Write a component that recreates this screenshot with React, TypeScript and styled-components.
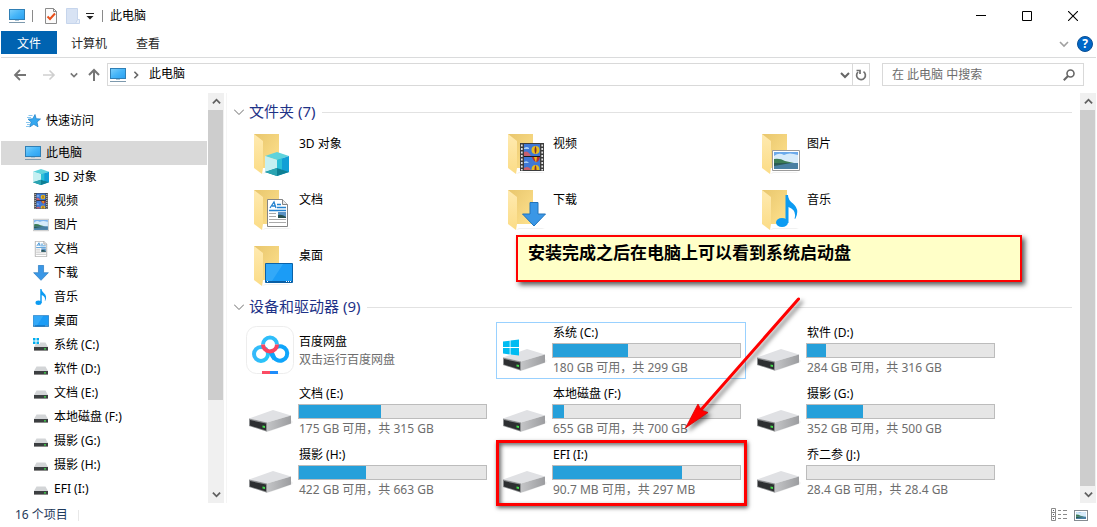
import React from "react";
import styled, { createGlobalStyle } from "styled-components";

const GlobalStyle = createGlobalStyle`
  *, *::before, *::after { box-sizing: border-box; }
  body {
    margin: 0;
    background: #fff;
    color: #000;
    font: 12px/16px "Noto Sans", "Noto Sans CJK SC", sans-serif;
  }
  button, input {
    font: inherit;
    color: inherit;
    margin: 0;
    padding: 0;
    border: 0;
    background: none;
  }
  ul { list-style: none; margin: 0; padding: 0; }
  a { color: inherit; text-decoration: none; }
  svg { display: block; flex: none; }
`;

/* ---------- window frame ---------- */

const Window = styled.div`
  display: flex;
  flex-direction: column;
  min-height: 100vh;
  padding: 0 1px;
  min-width: 0;
`;

const TitleBar = styled.header`
  display: flex;
  align-items: center;
  height: 31px;
  padding-left: 8px;
`;

const QuickTools = styled.div`
  display: flex;
  align-items: center;
  gap: 7px;
`;

const ToolButton = styled.button<{ $width?: number }>`
  display: flex;
  align-items: center;
  justify-content: center;
  width: ${(p) => p.$width ?? 16}px;
  height: 20px;
`;

const ToolDivider = styled.span`
  width: 1px;
  height: 12px;
  background: #8a8a8a;
`;

const WindowTitle = styled.h1`
  flex: 1;
  margin: 0 0 0 7px;
  font-size: 12px;
  font-weight: 400;
`;

const CaptionButton = styled.button`
  display: flex;
  align-items: center;
  justify-content: center;
  width: 46px;
  height: 30px;
`;

const RibbonTabs = styled.nav`
  display: flex;
  align-items: center;
  height: 27px;
  padding-bottom: 3px;
  border-bottom: 1px solid #dadbdc;
`;

const RibbonTab = styled.button<{ $active?: boolean }>`
  height: 23px;
  padding: 2px ${(p) => (p.$active ? 16 : 14)}px 0;
  margin-right: ${(p) => (p.$active ? 0 : 1)}px;
  color: ${(p) => (p.$active ? "#fff" : "#262626")};
  background: ${(p) => (p.$active ? "#0063b1" : "transparent")};
`;

const RibbonEnd = styled.div`
  display: flex;
  align-items: center;
  gap: 8px;
  margin-left: auto;
  padding: 3px 3px 0 0;
`;

const HelpButton = styled.button`
  width: 16px;
  height: 16px;
  border-radius: 50%;
  border: 1px solid #0a4f94;
  background: #0067c8;
  color: #fff;
  font-size: 12px;
  line-height: 14px;
  font-weight: 700;
`;

const AddressRow = styled.div`
  display: flex;
  align-items: center;
  height: 35px;
  padding: 0 12px 2px 11px;
`;

const NavButtons = styled.div`
  display: flex;
  align-items: center;
  gap: 8px;
  width: 95px;
`;

const AddressBox = styled.div`
  display: flex;
  flex: 1;
  align-items: center;
  height: 23px;
  padding-left: 2px;
  border: 1px solid #d9d9d9;
`;

const Crumb = styled.button`
  margin-left: 3px;
  padding-bottom: 2px;
`;

const AddressEnd = styled.div`
  display: flex;
  align-items: stretch;
  align-self: stretch;
  margin-left: auto;

  button { height: auto; }
  button + button { border-left: 1px solid #d9d9d9; }
`;

const SearchBox = styled.label`
  display: flex;
  align-items: center;
  width: 202px;
  height: 23px;
  margin-left: 12px;
  padding: 0 8px 0 9px;
  border: 1px solid #d9d9d9;
`;

const SearchInput = styled.input`
  flex: 1;
  min-width: 0;
  outline: 0;
  &::placeholder { color: #6d6d6d; opacity: 1; }
`;

/* ---------- body ---------- */

const Body = styled.div`
  display: flex;
  flex: 1;
`;

const Sidebar = styled.aside`
  display: flex;
  width: 225px;
  flex: none;
  padding-right: 2px;
`;

const NavTree = styled.ul`
  flex: 1;
  padding: 16px 1px 2px 0;
`;

const NavItem = styled.li<{ $root?: boolean }>`
  margin-bottom: ${(p) => (p.$root ? 8 : 0)}px;
`;

const NavLink = styled.a<{ $level: number; $selected?: boolean }>`
  display: flex;
  align-items: center;
  gap: 5px;
  height: 24px;
  padding-left: ${(p) => 16 + p.$level * 8}px;
  background: ${(p) => (p.$selected ? "#d9d9d9" : "transparent")};
`;

const ScrollTrack = styled.div`
  display: flex;
  flex-direction: column;
  width: 16px;
  background: #f0f0f0;
`;

const ScrollButton = styled.button`
  display: flex;
  align-items: center;
  justify-content: center;
  height: 17px;
  flex: none;
`;

const ScrollRun = styled.div`
  flex: 1;
  padding-right: 1px;
`;

const ScrollThumb = styled.div<{ $size: string }>`
  height: ${(p) => p.$size};
  background: #cdcdcd;
`;

const Pane = styled.main`
  position: relative;
  flex: 1;
  min-width: 0;
  padding: 7px 8px 2px 7px;
  border-left: 1px solid #f5f5f5;
`;

const GroupHeader = styled.button`
  display: flex;
  align-items: center;
  width: 100%;
  height: 24px;
  margin-bottom: 3px;
  color: #1e3287;
  font-size: 15px;
  line-height: 20px;
  white-space: nowrap;

  span { padding-bottom: 2px; }
  svg { margin-right: 5px; }

  &::after {
    content: "";
    flex: 1;
    height: 1px;
    margin-left: 7px;
    background: #e2e2e2;
  }
`;

const TileGrid = styled.ul<{ $gap: number }>`
  display: grid;
  grid-template-columns: repeat(auto-fill, 250px);
  gap: ${(p) => p.$gap}px 4px;
  padding-left: 8px;
`;

const FolderTile = styled.li`
  display: flex;
  gap: 5px;
  height: 56px;
  padding: 3px 4px 0;
`;

const FolderName = styled.span`
  padding-top: 6px;
`;

const DriveTile = styled.li<{ $focused?: boolean }>`
  position: relative;
  display: flex;
  gap: 4px;
  height: 57px;
  padding: 3px;
  border: 1px solid ${(p) => (p.$focused ? "#99d1ff" : "transparent")};
`;

const DriveInfo = styled.div`
  display: flex;
  flex-direction: column;
  flex: 1;
  justify-content: center;
  gap: 2px;
  margin: -1px 0;
`;

const DriveText = styled.span<{ $muted?: boolean }>`
  padding-left: 1px;
  color: ${(p) => (p.$muted ? "#6d6d6d" : "#000")};
`;

const Gauge = styled.div`
  width: 189px;
  height: 15px;
  border: 1px solid #bcbcbc;
  background: #e6e6e6;
`;

const GaugeFill = styled.div`
  height: 100%;
  background: #26a0da;
`;

/* ---------- annotations ---------- */

const Highlight = styled.span`
  position: absolute;
  inset: -5px -2px -6px -1px;
  border: 3px solid #f00;
  box-shadow: 1px 2px 4px rgba(0, 0, 0, 0.6), inset 2px 2px 4px rgba(0, 0, 0, 0.6);
`;

const Callout = styled.p`
  position: absolute;
  top: 142px;
  left: 289px;
  width: 506px;
  height: 47px;
  margin: 0;
  padding: 5px 10px;
  border: 2px solid #f00;
  background: #ffffc8;
  box-shadow: 3px 3px 5px rgba(0, 0, 0, 0.65);
  font: 700 17px/20px "Noto Sans CJK SC", sans-serif;
`;

const Arrow = styled.svg`
  position: absolute;
  top: 197px;
  left: 449px;
  filter: drop-shadow(3px 3px 2px rgba(0, 0, 0, 0.5));
  pointer-events: none;
`;

const StatusBar = styled.footer`
  display: flex;
  align-items: center;
  gap: 7px;
  height: 24px;
  padding: 0 8px 0 14px;
  color: #1e395b;
`;

const StatusDivider = styled.span`
  width: 1px;
  height: 11px;
  margin: 0 auto 0 3px;
  background: #e8e8e8;
`;

/* ---------- line icons ---------- */

type ChevronProps = { dir: "up" | "down" | "right"; size?: number; color?: string; weight?: number };

const chevronPaths = { up: "M1 7 5 3 9 7", down: "M1 3 5 7 9 3", right: "M3 1 7 5 3 9" };

const Chevron = ({ dir, size = 10, color = "#666", weight = 2 }: ChevronProps) => (
  <svg width={size} height={size} viewBox="0 0 10 10" fill="none" stroke={color} strokeWidth={weight}>
    <path d={chevronPaths[dir]} />
  </svg>
);

const GroupChevron = () => (
  <svg width="10" height="10" viewBox="0 0 10 10" fill="none" stroke="#6d6d6d">
    <path d="M0 2.500 5 7.500 10 2.500" />
  </svg>
);

const LeftArrow = ({ color }: { color: string }) => (
  <svg width="14" height="14" viewBox="0 0 14 14" fill="none" stroke={color} strokeWidth="1.800">
    <path d="M13 7H2M7 2 2 7l5 5" />
  </svg>
);

const RightArrow = ({ color }: { color: string }) => (
  <svg width="14" height="14" viewBox="0 0 14 14" fill="none" stroke={color} strokeWidth="1.600">
    <path d="M1 7h11M7.500 2.500 12 7l-4.500 4.500" />
  </svg>
);

const UpArrow = () => (
  <svg width="12" height="14" viewBox="0 0 12 14" fill="none" stroke="#757575" strokeWidth="2">
    <path d="M6 13V2M1 7l5-5 5 5" />
  </svg>
);

const RefreshIcon = () => (
  <svg width="12" height="12" viewBox="0 0 12 12" fill="none" stroke="#707070" strokeWidth="1.700">
    <path d="M3 3A4.400 4.400 0 1 0 8.500 2.600" />
    <path d="M1.500 1.500H5V5" />
  </svg>
);

const SearchIcon = () => (
  <svg width="12" height="12" viewBox="0 0 12 12" fill="none" stroke="#666">
    <circle cx="7.500" cy="4.500" r="3.500" strokeWidth="1.600" />
    <path d="M5 7 .8 11.200" strokeWidth="2" />
  </svg>
);

/* ---------- picture icons ---------- */

const PcIcon = () => (
  <svg width="16" height="16" viewBox="0 0 16 16">
    <defs>
      <linearGradient id="pcScreen" x1="0" y1="0" x2="1" y2="1">
        <stop offset="0" stopColor="#7fd0fb" />
        <stop offset=".5" stopColor="#45b5f8" />
        <stop offset="1" stopColor="#2a9ff0" />
      </linearGradient>
    </defs>
    <rect x=".5" y="1.500" width="15" height="10" fill="url(#pcScreen)" stroke="#2f7fb5" />
    <path d="M6 12h4v1H6z" fill="#a9c4d6" />
    <path d="M0 14.500h16" stroke="#7d99ad" />
  </svg>
);

const StarIcon = () => (
  <svg width="16" height="16" viewBox="0 0 16 16">
    <path
      d="M10 1.500l1.200 4.200 4.300.3-3.500 3 1 4.800-4.200-2.500-4.100 2.700 1.500-5L3 6.200l4.800-.5z"
      fill="#35a8f0"
      stroke="#1b7cc6"
      strokeWidth=".7"
    />
    <path d="M3.500 2.500h4M2 4.500h4M1 9.500h4M2 11.500h3M1 13.500h3" stroke="#7cc0ec" strokeWidth=".9" />
  </svg>
);

const CubeArt = () => (
  <>
    <path d="M12 0 24 4 12 8 0 4z" fill="#5ed3dc" />
    <path d="M0 4 12 8V24L0 20z" fill="#c5f0f2" />
    <path d="M24 4 12 8V24L24 20z" fill="#129fd6" />
    <path d="M0 20 12 16 24 20 12 24z" fill="#0e7f93" />
    <path d="M0 20 12 16V24z" fill="#2aa4b2" />
    <path d="M12 8 17 6.300V17.500L12 16z" fill="#2bc0d8" />
  </>
);

const FilmArt = () => (
  <>
    <path d="M0 0h24v28H0z" fill="#3c3c3c" />
    <path d="M4 1h16v12H4zM4 14h16v13H4z" fill="#3f78d6" />
    <path d="M4 9q4-2 7 4H4zM4 25q5-3 7 2H4z" fill="#c8606e" />
    <path d="M4 5q3-2 5 0v1H4zM4 19q3-2 5 1H4z" fill="#a9cdf3" />
    <path d="M1.800 1.500v26M22.200 1.500v26" stroke="#e4e4e4" strokeWidth="1.700" strokeDasharray="2 1.500" />
    <circle cx="15.500" cy="7" r="4" fill="#e8bd1c" />
    <path d="M15.500 3q-2 4 0 8 2-4 0-8" fill="#7c2f2c" />
    <path d="M12 14h8q-1 5-4 5-3-1-4-5" fill="#b8302e" />
    <path d="M14 14h3l-1 6z" fill="#e8bd1c" />
    <path d="M11.500 27q0-5 4-5t4 5z" fill="#e8bd1c" />
    <path d="M14.500 27q0-4 1-5 1 1 1 5z" fill="#8c322c" />
    <path d="M4 13h16v1H4z" fill="#1b1b1b" />
  </>
);

const PictureArt = () => (
  <>
    <path d="M.5.5h27v20H.5z" fill="#fff" stroke="#9a9a9a" />
    <path d="M2 2h24v17H2z" fill="#6ba9ea" />
    <path d="M2 6q5-4 10-1 5-3 14 0v8H2z" fill="#d7ebfa" />
    <path d="M2 9q6-1 11 2l9 2H2z" fill="#3d7d56" />
    <path d="M2 13h24v6H2z" fill="#497fa2" />
    <path d="M2 13h17L2 16z" fill="#2b5c53" />
  </>
);

const DocArt = () => (
  <>
    <path d="M.5.5h15l5 5v22H.5z" fill="#fff" stroke="#858585" />
    <path d="M15.500.5v5h5" fill="#e8e8e8" stroke="#858585" />
    <path d="M3 9 7 3l2 6M5 7h3M10 5.500h4M10 8.500h9M2 11.500h17" fill="none" stroke="#2382cf" strokeWidth="1.300" />
    <path d="M2 14.500h7M2 17.500h7M2 20.500h17M2 23.500h17" stroke="#aaa" />
    <path d="M11 13h8v6h-8z" fill="#5b92c4" />
    <path d="M11 16q4-1 8 2v1h-8z" fill="#27504f" />
  </>
);

const DownArt = () => <path d="M8 .5h8V12h7.500L12 24 .5 12H8z" fill="#3a97e6" stroke="#2274bb" />;

const NoteArt = () => (
  <>
    <ellipse cx="6" cy="27.500" rx="6" ry="4.500" fill="#0c9bf2" />
    <path d="M9.500 0H12q0 5 5 8.500 7 6 2.500 15-1 1-.8-.5 2-8-6.200-11V28h-3z" fill="#0c9bf2" />
  </>
);

const DesktopArt = () => (
  <>
    <path d="M.5.5h27v19H.5z" fill="#1b9cf6" stroke="#0a62a8" />
    <path d="M1 1h17L7 18H1z" fill="#45b2fa" opacity=".6" />
    <path d="M1 18h26v1.500H1z" fill="#0a5da3" />
    <path d="M2 18.500h2M21 18.500h5" stroke="#fff" strokeDasharray="1 1" />
  </>
);

const art = {
  cube: { Art: CubeArt, w: 24, h: 24, x: 19, y: 22 },
  film: { Art: FilmArt, w: 24, h: 28, x: 20, y: 13 },
  picture: { Art: PictureArt, w: 28, h: 21, x: 18, y: 20 },
  doc: { Art: DocArt, w: 21, h: 28, x: 21, y: 13 },
  down: { Art: DownArt, w: 24, h: 25, x: 22, y: 16 },
  note: { Art: NoteArt, w: 22, h: 32, x: 22, y: 9 },
  desktop: { Art: DesktopArt, w: 28, h: 20, x: 19, y: 21 },
};

type ArtName = keyof typeof art;

const SmallIcon = ({ name }: { name: ArtName }) => {
  const { Art, w, h } = art[name];
  return (
    <svg width="16" height="16" viewBox={`0 0 ${w} ${h}`}>
      <Art />
    </svg>
  );
};

const FolderIcon = ({ name }: { name: ArtName }) => {
  const { Art, w, h, x, y } = art[name];
  return (
    <svg width="48" height="48" viewBox="0 0 48 48">
      <defs>
        <linearGradient id="folderBack" x1="0" y1="0" x2="1" y2="1">
          <stop offset="0" stopColor="#e8c66d" />
          <stop offset="1" stopColor="#ffe28e" />
        </linearGradient>
        <linearGradient id="folderFlap" x1="0" y1="0" x2="0" y2="1">
          <stop offset="0" stopColor="#ffeab0" />
          <stop offset="1" stopColor="#fbdc86" />
        </linearGradient>
      </defs>
      <path d="M16 44l3-2h26l-3 1H20z" fill="#f1f1f1" />
      <path d="M8 4h25v34H8z" fill="url(#folderBack)" />
      <path d="M8 4l9 7v27l-1 6-8-6z" fill="url(#folderFlap)" />
      <svg x={x} y={y} width={w} height={h} viewBox={`0 0 ${w} ${h}`}>
        <Art />
      </svg>
    </svg>
  );
};

const SmallDrive = ({ system }: { system?: boolean }) => (
  <svg width="16" height="16" viewBox="0 0 16 16">
    <path d="M3.500 5.500h9l2.500 4.500H1z" fill="#d3d5d7" />
    <path d="M1 10h14v3.500H1z" fill="#3c3f41" />
    <path d="M1 13.500h14" stroke="#8a8a8a" />
    <path d="M11 11.200h2v1.300h-2z" fill="#3fe04a" />
    {system && (
      <>
        <path d="M0 0h7v7H0z" fill="#fff" />
        <path d="M0 1h2.500v2.500H0zM3.500 1H6v2.500H3.500zM0 4.500h2.500V7H0zM3.500 4.500H6V7H3.500z" fill="#00adef" />
      </>
    )}
  </svg>
);

const DriveIcon = ({ system }: { system?: boolean }) => (
  <svg width="48" height="48" viewBox="0 0 48 48">
    <defs>
      <linearGradient id="driveSide" x1="0" y1="0" x2="1" y2="0">
        <stop offset="0" stopColor="#c4c5c7" />
        <stop offset="1" stopColor="#9c9da0" />
      </linearGradient>
    </defs>
    <path d="M22 45 45 37l2-2-2-2z" fill="#f0f0f0" />
    <path d="M3 31.500 27 23l18 5.500L21 35.500z" fill="#e0e1e4" />
    <path d="M21 35.500 45 28.500v8L21 44.700z" fill="url(#driveSide)" />
    <path d="M3 31.500 21 35.500v9.200L3 39z" fill="#8d8f91" />
    <path d="M4 33 20 36.500v7L4 38.500z" fill="#2d2f31" />
    <path d="M16.500 38.500l2.500.6v2l-2.500-.6z" fill="#43dd4b" />
    {system && (
      <path
        d="M3 15.600 9.700 14.700V21H3zM10.500 14.600 19 13.400V21H10.500zM3 21.900H9.700V28.400L3 27.500zM10.500 21.900H19V29.600L10.500 28.500z"
        fill="#00bcf2"
      />
    )}
  </svg>
);

const NetdiskIcon = () => (
  <svg width="48" height="48" viewBox="0 0 48 48" fill="none" strokeWidth="4">
    <defs>
      <linearGradient id="netLeft" x1="0" y1="0" x2="1" y2="0">
        <stop offset="0" stopColor="#36b9fa" />
        <stop offset="1" stopColor="#25c8f8" />
      </linearGradient>
    </defs>
    <rect x=".5" y=".5" width="47" height="47" rx="10" fill="#fff" stroke="#ededed" strokeWidth="1" />
    <circle cx="15" cy="28" r="7" stroke="url(#netLeft)" />
    <path d="M24 24.500q1.500 1 3 4.500A7.200 7.200 0 1 0 30 21.500" stroke="#0fa5fb" />
    <path d="M24 25q2 5 4.500 8" stroke="#0fa5fb" />
    <path d="M17 18.500a7 7 0 0 1 14 0" stroke="#2fbefa" />
    <path d="M17 18.500a7 7 0 0 0 14 0" stroke="#fb4560" />
    <path d="M16 45h8v3h-8z" fill="#fb4b63" />
    <path d="M24 45h8v3h-8z" fill="#1e8cfa" />
  </svg>
);

const CheckedPageIcon = () => (
  <svg width="14" height="16" viewBox="0 0 14 16" fill="none">
    <path d="M1.500.5h8l3 3v12h-11z" fill="#fbfbfb" stroke="#8b8b8b" />
    <path d="M9.500.5v3h3" stroke="#8b8b8b" />
    <path d="M3.500 8.500 6 11l5-5.500" stroke="#e8501c" strokeWidth="2" />
  </svg>
);

const NewFolderIcon = () => (
  <svg width="14" height="16" viewBox="0 0 14 16">
    <path d="M.5.5h11v15H.5z" fill="#d8e3f4" stroke="#c6d5ec" />
    <path d="M11.500 11.500h2v4h-4z" fill="#e9f0fa" stroke="#c6d5ec" />
  </svg>
);

const CustomizeIcon = () => (
  <svg width="8" height="8" viewBox="0 0 8 8">
    <path d="M0 1.500h8" stroke="#222" />
    <path d="M.5 4h7L4 7.500z" fill="#222" />
  </svg>
);

const DetailsViewIcon = () => (
  <svg width="16" height="14" viewBox="0 0 16 14" fill="none" stroke="#8a8a8a">
    <path d="M.5.500h4v12h-4zM.5 4.500h4M.5 8.500h4" />
    <path d="M7 2.500h3M12 2.500h4M7 6.500h3M12 6.500h4M7 10.500h3M12 10.500h4" />
    <path d="M2 2.500h1M2 6.500h1M2 10.500h1" stroke="#556" />
  </svg>
);

const TilesViewIcon = () => (
  <svg width="14" height="11" viewBox="0 0 28 21" preserveAspectRatio="none">
    <PictureArt />
    <path d="M1 1h26v19H1z" fill="none" stroke="#858b91" strokeWidth="2" />
    <path d="M3 3h22v15H3z" fill="none" stroke="#fff" strokeWidth="2" />
  </svg>
);

/* ---------- data ---------- */

const folders: { name: string; icon: ArtName }[] = [
  { name: "3D 对象", icon: "cube" },
  { name: "视频", icon: "film" },
  { name: "图片", icon: "picture" },
  { name: "文档", icon: "doc" },
  { name: "下载", icon: "down" },
  { name: "音乐", icon: "note" },
  { name: "桌面", icon: "desktop" },
];

const navDrives = ["系统 (C:)", "软件 (D:)", "文档 (E:)", "本地磁盘 (F:)", "摄影 (G:)", "摄影 (H:)", "EFI (I:)"];

type Drive = { name: string; space: string; used: number; system?: boolean; marked?: boolean };

const drives: Drive[] = [
  { name: "系统 (C:)", space: "180 GB 可用，共 299 GB", used: 40, system: true },
  { name: "软件 (D:)", space: "284 GB 可用，共 316 GB", used: 10 },
  { name: "文档 (E:)", space: "175 GB 可用，共 315 GB", used: 44 },
  { name: "本地磁盘 (F:)", space: "655 GB 可用，共 700 GB", used: 6 },
  { name: "摄影 (G:)", space: "352 GB 可用，共 500 GB", used: 30 },
  { name: "摄影 (H:)", space: "422 GB 可用，共 663 GB", used: 36 },
  { name: "EFI (I:)", space: "90.7 MB 可用，共 297 MB", used: 69, marked: true },
  { name: "乔二参 (J:)", space: "28.4 GB 可用，共 28.4 GB", used: 0 },
];

const Scrollbar = ({ size }: { size: string }) => (
  <ScrollTrack>
    <ScrollButton aria-label="向上滚动">
      <Chevron dir="up" size={9} color="#606060" />
    </ScrollButton>
    <ScrollRun>
      <ScrollThumb $size={size} />
    </ScrollRun>
    <ScrollButton aria-label="向下滚动">
      <Chevron dir="down" size={9} color="#606060" />
    </ScrollButton>
  </ScrollTrack>
);

export default function App() {
  return (
    <>
      <GlobalStyle />
      <Window>
        <TitleBar>
          <QuickTools>
            <PcIcon />
            <ToolDivider />
            <ToolButton $width={22} aria-label="属性">
              <CheckedPageIcon />
            </ToolButton>
            <ToolButton $width={8} aria-label="新建文件夹">
              <NewFolderIcon />
            </ToolButton>
            <ToolButton $width={11} aria-label="自定义快速访问工具栏">
              <CustomizeIcon />
            </ToolButton>
            <ToolDivider />
          </QuickTools>
          <WindowTitle>此电脑</WindowTitle>
          <CaptionButton aria-label="最小化">
            <svg width="10" height="10" viewBox="0 0 10 10" stroke="#000">
              <path d="M0 4.500h10" />
            </svg>
          </CaptionButton>
          <CaptionButton aria-label="最大化">
            <svg width="10" height="10" viewBox="0 0 10 10" fill="none" stroke="#000">
              <path d="M.5.5h9v9h-9z" />
            </svg>
          </CaptionButton>
          <CaptionButton aria-label="关闭">
            <svg width="10" height="10" viewBox="0 0 10 10" stroke="#000" strokeWidth="1.100">
              <path d="M0 0l10 10M10 0 0 10" />
            </svg>
          </CaptionButton>
        </TitleBar>

        <RibbonTabs>
          <RibbonTab $active>文件</RibbonTab>
          <RibbonTab>计算机</RibbonTab>
          <RibbonTab>查看</RibbonTab>
          <RibbonEnd>
            <Chevron dir="down" color="#a0a0a0" weight={1.6} />
            <HelpButton aria-label="帮助">?</HelpButton>
          </RibbonEnd>
        </RibbonTabs>

        <AddressRow>
          <NavButtons>
            <ToolButton aria-label="后退">
              <LeftArrow color="#757575" />
            </ToolButton>
            <ToolButton $width={26} aria-label="前进">
              <RightArrow color="#cfcfcf" />
            </ToolButton>
            <ToolButton $width={8} aria-label="最近浏览的位置">
              <Chevron dir="down" size={8} color="#777" />
            </ToolButton>
            <ToolButton aria-label="上移">
              <UpArrow />
            </ToolButton>
          </NavButtons>
          <AddressBox>
            <PcIcon />
            <ToolButton $width={20} aria-label="展开">
              <Chevron dir="right" size={8} />
            </ToolButton>
            <Crumb>此电脑</Crumb>
            <AddressEnd>
              <ToolButton $width={14} aria-label="以前的位置">
                <Chevron dir="down" />
              </ToolButton>
              <ToolButton $width={17} aria-label="刷新">
                <RefreshIcon />
              </ToolButton>
            </AddressEnd>
          </AddressBox>
          <SearchBox>
            <SearchInput type="text" placeholder="在 此电脑 中搜索" aria-label="搜索" />
            <SearchIcon />
          </SearchBox>
        </AddressRow>

        <Body>
          <Sidebar>
            <NavTree>
              <NavItem $root>
                <NavLink href="#quick" $level={1}>
                  <StarIcon />
                  快速访问
                </NavLink>
              </NavItem>
              <NavItem>
                <NavLink href="#pc" $level={1} $selected>
                  <PcIcon />
                  此电脑
                </NavLink>
              </NavItem>
              {folders
                .map((_, i) => folders[i])
                .map((f) => (
                  <NavItem key={f.name}>
                    <NavLink href={`#${f.icon}`} $level={2}>
                      <SmallIcon name={f.icon} />
                      {f.name}
                    </NavLink>
                  </NavItem>
                ))}
              {navDrives.map((name, i) => (
                <NavItem key={name}>
                  <NavLink href={`#drive-${i}`} $level={2}>
                    <SmallDrive system={i === 0} />
                    {name}
                  </NavLink>
                </NavItem>
              ))}
            </NavTree>
            <Scrollbar size="77%" />
          </Sidebar>

          <Pane>
            <GroupHeader>
              <GroupChevron />
              <span>文件夹 (7)</span>
            </GroupHeader>
            <TileGrid $gap={0}>
              {folders.map((f) => (
                <FolderTile key={f.name}>
                  <FolderIcon name={f.icon} />
                  <FolderName>{f.name}</FolderName>
                </FolderTile>
              ))}
            </TileGrid>

            <GroupHeader>
              <GroupChevron />
              <span>设备和驱动器 (9)</span>
            </GroupHeader>
            <TileGrid $gap={4}>
              <DriveTile>
                <NetdiskIcon />
                <DriveInfo>
                  <DriveText>百度网盘</DriveText>
                  <DriveText $muted>双击运行百度网盘</DriveText>
                </DriveInfo>
              </DriveTile>
              {drives.map((d) => (
                <DriveTile key={d.name} $focused={d.system}>
                  <DriveIcon system={d.system} />
                  <DriveInfo>
                    <DriveText>{d.name}</DriveText>
                    <Gauge role="meter" aria-label={d.name} aria-valuemin={0} aria-valuemax={100} aria-valuenow={d.used}>
                      <GaugeFill style={{ width: `${d.used}%` }} />
                    </Gauge>
                    <DriveText $muted>{d.space}</DriveText>
                  </DriveInfo>
                  {d.marked && <Highlight />}
                </DriveTile>
              ))}
            </TileGrid>

            <Callout>安装完成之后在电脑上可以看到系统启动盘</Callout>
            <Arrow width="132" height="148" viewBox="0 0 132 148">
              <path d="M122.500 9 24 121" stroke="#f00" strokeWidth="3" strokeLinecap="round" />
              <path d="M9.500 138 22 114 25 120 32 122.500z" fill="#f00" stroke="#d00" strokeWidth=".8" />
            </Arrow>
          </Pane>
          <Scrollbar size="100%" />
        </Body>

        <StatusBar>
          <span>16 个项目</span>
          <StatusDivider />
          <DetailsViewIcon />
          <TilesViewIcon />
        </StatusBar>
      </Window>
    </>
  );
}
